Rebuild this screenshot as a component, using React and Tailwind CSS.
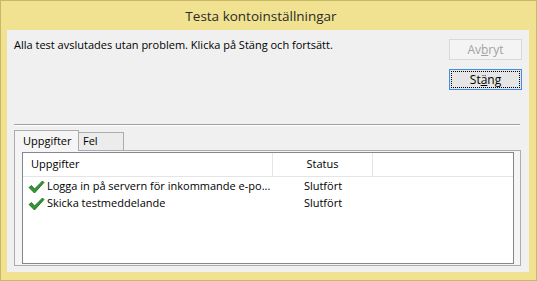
import React from "react"

const FONT = { fontFamily: '"Segoe UI", "Open Sans", "Noto Sans", sans-serif' }

const tasks = [
  { name: "Logga in på servern för inkommande e-po...", status: "Slutfört" },
  { name: "Skicka testmeddelande", status: "Slutfört" },
]

function Check() {
  return (
    <svg width="17" height="14" viewBox="0 0 17 14" className="shrink-0">
      <path d="M1 7.5 L3.5 5.5 L6.5 9 L14.5 1 L16 2.5 L6.5 13 Z" fill="#2f9a2f" stroke="#17621a" strokeWidth="0.8" strokeLinejoin="round" />
    </svg>
  )
}

export default function App() {
  return (
    <div
      style={FONT}
      className="w-[537px] h-[281px] border border-[#c9b766] bg-[#f0e290] pl-[6px] pr-[7px] pb-[8px] flex flex-col"
    >
      {/* title bar */}
      <div className="h-[29px] flex items-center justify-center text-[13.5px] text-[#2b2b2b] pt-[1px] pr-[14px]">
        Testa kontoinställningar
      </div>

      {/* client area */}
      <div className="flex-1 bg-[#f0f0f0] flex flex-col text-[11px] text-black">
        <div className="flex h-[94px]">
          <div className="flex-1 pl-[7px] pt-[7px] leading-[16px]">
            Alla test avslutades utan problem. Klicka på Stäng och fortsätt.
          </div>
          <div className="flex flex-col gap-[9px] pt-[9px] pr-[7px]">
            <div className="w-[73px] h-[21px] border border-[#d9d9d9] bg-[#f4f4f4] text-[#a3a3a3] text-[12px] flex items-center justify-center">
              Av<span className="underline">b</span>ryt
            </div>
            <div className="w-[73px] h-[21px] border border-[#3d8ee6] bg-[#e6e6e6] p-[1px] text-[12px]">
              <div className="h-full border border-dotted border-black flex items-center justify-center">
                St<span className="underline">ä</span>ng
              </div>
            </div>
          </div>
        </div>

        {/* separator */}
        <div className="ml-[7px] mr-[9px] h-[2px] border-t border-[#a0a0a0] border-b border-b-white" />

        {/* tabs */}
        <div className="flex ml-[7px] mt-[3px] h-[21px] items-end">
          <div className="h-[21px] w-[65px] border border-b-0 border-[#acacac] bg-[#f5f5f5] flex items-center pl-[8px] relative z-10 -mb-[1px]">
            Uppgifter
          </div>
          <div className="h-[18px] w-[45px] border border-l-0 border-b-0 border-[#acacac] bg-[#ececec] flex items-center pl-[4px]">
            Fel
          </div>
        </div>

        <div className="flex-1 ml-[7px] mr-[8px] mb-[6px] border border-[#acacac] bg-[#f5f5f5] pl-[7px] pr-[6px] pt-[1px] pb-[1px] flex">
          <div className="flex-1 border border-[#828790] bg-white flex flex-col">
            <div className="h-[24px] flex border-b border-[#e5e5e5]">
              <div className="w-[250px] border-r border-[#e5e5e5] flex items-center pl-[8px]">Uppgifter</div>
              <div className="w-[100px] border-r border-[#e5e5e5] flex items-center justify-center">Status</div>
            </div>
            <div className="flex flex-col pt-[1px]">
              {tasks.map((t) => (
                <div key={t.name} className="h-[17px] flex items-center">
                  <div className="w-[250px] flex items-center pl-[5px] gap-[2px]">
                    <Check />
                    <span className="whitespace-nowrap">{t.name}</span>
                  </div>
                  <div className="w-[100px] flex justify-center">{t.status}</div>
                </div>
              ))}
            </div>
          </div>
        </div>
      </div>
    </div>
  )
}
